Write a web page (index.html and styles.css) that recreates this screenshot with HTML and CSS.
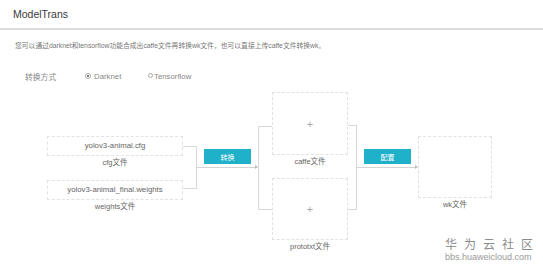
FILE: index.html
```html
<!DOCTYPE html>
<html lang="zh">
<head>
    <meta charset="UTF-8">
    <meta name="viewport" content="width=device-width, initial-scale=1.0">
    <title>ModelTrans</title>
    <link rel="stylesheet" href="styles.css">
</head>
<body>
    <div class="header">ModelTrans</div>

    <p class="desc">您可以通过darknet和tensorflow功能合成出caffe文件再转换wk文件，也可以直接上传caffe文件转换wk。</p>

    <div class="mode">
        <span class="mode-label">转换方式</span>
        <span class="radio checked"></span><span class="radio-text">Darknet</span>
        <span class="radio small"></span><span class="radio-text tf">Tensorflow</span>
    </div>

    <div class="diagram">
        <div class="inputs">
            <div class="file-input">yolov3-animal.cfg</div>
            <div class="file-label">cfg文件</div>
            <div class="file-input second">yolov3-animal_final.weights</div>
            <div class="file-label">weights文件</div>
        </div>
        <div class="bracket bracket-in"></div>
        <div class="link">
            <button class="btn">转换</button>
            <div class="arrow"></div>
        </div>
        <div class="bracket bracket-split"></div>
        <div class="outputs">
            <div class="upload">+</div>
            <div class="file-label">caffe文件</div>
            <div class="upload second">+</div>
            <div class="file-label">prototxt文件</div>
        </div>
        <div class="bracket bracket-join"></div>
        <div class="link">
            <button class="btn">配置</button>
            <div class="arrow"></div>
        </div>
        <div class="result">
            <div class="upload wk"></div>
            <div class="file-label">wk文件</div>
        </div>
    </div>

    <div class="watermark">
        <div class="wm-title">华为云社区</div>
        <div class="wm-url">bbs.huaweicloud.com</div>
    </div>
</body>
</html>
```

FILE: styles.css
```css
* {
    box-sizing: border-box;
}
body {
    font-family: 'Liberation Sans', 'Noto Sans CJK SC', sans-serif;
    color: #333;
    margin: 0;
    background: #fff;
    position: relative;
    width: 543px;
    height: 270px;
    overflow: hidden;
}
.header {
    height: 30px;
    line-height: 28px;
    padding-left: 13px;
    font-size: 10.5px;
    color: #3a3a3a;
    border-bottom: 2px solid #dcdcdc;
}
.desc {
    margin: 11px 0 0;
    padding-left: 15px;
    font-size: 6.8px;
    line-height: 10px;
    color: #777;
    white-space: nowrap;
}
.mode {
    display: flex;
    align-items: center;
    margin-top: 20px;
    padding-left: 25px;
    height: 10px;
    font-size: 7.5px;
    color: #777;
}
.mode-label {
    width: 60px;
    font-size: 7.8px;
    color: #888;
}
.radio {
    width: 6px;
    height: 6px;
    border: 1px solid #aaa;
    border-radius: 50%;
    margin-right: 3px;
    position: relative;
}
.radio.checked::after {
    content: "";
    position: absolute;
    left: 1px;
    top: 1px;
    width: 2px;
    height: 2px;
    border-radius: 50%;
    background: #555;
}
.radio.small {
    width: 5px;
    height: 5px;
    margin-right: 1px;
    margin-top: -2px;
}
.radio-text {
    width: 54px;
    font-size: 7.8px;
    color: #888;
}
.diagram {
    display: flex;
    align-items: flex-start;
    margin-top: 11px;
    padding-left: 47px;
}
.inputs {
    width: 136px;
    margin-top: 44px;
}
.file-input {
    height: 20px;
    line-height: 18px;
    border: 1px dashed #e2e2e2;
    text-align: center;
    font-size: 7.8px;
    color: #666;
}
.file-input.second {
    margin-top: 10px;
}
.file-label {
    height: 14px;
    line-height: 14px;
    text-align: center;
    font-size: 7.5px;
    color: #666;
}
.bracket {
    border: 1px solid #d8d8d8;
}
.bracket-in {
    width: 14px;
    height: 43px;
    margin-top: 54px;
    border-left: none;
}
.bracket-split {
    width: 14px;
    height: 84px;
    margin-top: 34px;
    border-right: none;
}
.bracket-join {
    width: 9px;
    height: 85px;
    margin-top: 33px;
    border-left: none;
}
.link {
    width: 61px;
    padding-top: 57px;
}
.btn {
    display: block;
    margin-left: 7px;
    width: 47px;
    height: 15px;
    padding: 0;
    border: none;
    background: #1fb1c9;
    color: #fff;
    font-family: inherit;
    font-size: 7px;
}
.arrow {
    position: relative;
    margin-top: 3px;
    height: 1px;
    width: 59px;
    background: #d4d4d4;
}
.arrow::after {
    content: "";
    position: absolute;
    right: -2px;
    top: -2px;
    border-left: 3px solid #bbb;
    border-top: 2.5px solid transparent;
    border-bottom: 2.5px solid transparent;
}
.outputs {
    width: 76px;
}
.upload {
    height: 63px;
    border: 1px dashed #e2e2e2;
    display: flex;
    align-items: center;
    justify-content: center;
    font-size: 11px;
    color: #aaa;
}
.upload.second {
    margin-top: 9px;
    height: 62px;
}
.result {
    width: 74px;
    margin-top: 44px;
}
.upload.wk {
    height: 62px;
}
.watermark {
    position: absolute;
    right: 10px;
    bottom: 7px;
    width: 88px;
    color: #8c8c8c;
}
.wm-title {
    font-size: 12px;
    line-height: 14px;
    letter-spacing: 7px;
    white-space: nowrap;
}
.wm-url {
    font-size: 9px;
    line-height: 11px;
    color: #999;
}
```
